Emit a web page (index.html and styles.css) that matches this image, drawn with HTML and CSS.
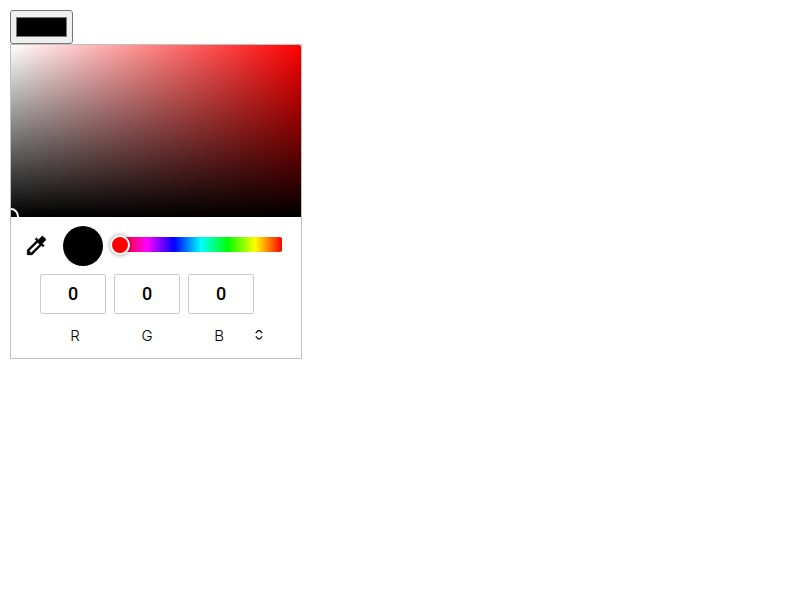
FILE: index.html
```html
<!DOCTYPE html>
<html lang="en">
<head>
<meta charset="utf-8">
<title>Color picker</title>
<link rel="stylesheet" href="styles.css">
</head>
<body>
<button class="swatch-button" aria-label="Color"><span class="swatch"></span></button>
<div class="picker">
  <div class="spectrum"><span class="spectrum-handle"></span></div>
  <div class="controls">
    <svg class="dropper" viewBox="0 0 24 24"><path d="M20.71 5.63l-2.34-2.34c-.39-.39-1.02-.39-1.41 0l-3.12 3.12-1.93-1.91-1.41 1.41 1.42 1.42L3 16.25V21h4.75l8.92-8.92 1.42 1.42 1.41-1.41-1.92-1.92 3.12-3.12c.4-.4.4-1.03.01-1.42zM6.92 19L5 17.08l8.06-8.06 1.92 1.92L6.92 19z"/></svg>
    <div class="preview"></div>
    <div class="hue"><span class="hue-thumb"></span></div>
  </div>
  <div class="values"><div class="value">0</div><div class="value">0</div><div class="value">0</div></div>
  <div class="labels">
    <span>R</span><span>G</span><span>B</span>
    <svg class="toggle" viewBox="0 0 8 12"><path d="M1.2 4.2V3.6L3.2 1.6H4.8L6.8 3.6V4.2M1.2 7.2V7.8L3.2 9.8H4.8L6.8 7.8V7.2"/></svg>
  </div>
</div>
</body>
</html>
```
FILE: styles.css
```css
* { box-sizing: border-box; }
body { margin: 0; padding: 10px; background: #fff; color: #000; font-family: Roboto, sans-serif; }
.swatch-button { display: flex; width: 63px; height: 34px; padding: 6px 5px; border: 1px solid #767676; border-radius: 3px; background: #efefef; }
.swatch { width: 51px; height: 20px; border: 1px solid #777; background: #000; }
.picker { width: 292px; height: 315px; border: 1px solid #bfbfbf; background: #fff; }
.spectrum { position: relative; height: 172px; overflow: hidden; border-top-right-radius: 2px; background: linear-gradient(to top, #000, transparent), linear-gradient(to right, #fff, #f00); }
.spectrum-handle { position: absolute; left: -8px; bottom: -8px; width: 16px; height: 17px; border: 2px solid #fff; border-radius: 50%; }
.controls { display: flex; padding: 9px 19px 0 13px; height: 57px; }
.dropper { width: 25px; height: 25px; margin-top: 7px; stroke: #000; stroke-width: .35; }
.preview { width: 40px; height: 40px; margin-left: 14px; border-radius: 50%; background: #000; }
.hue { position: relative; flex: 1; height: 15px; margin: 11px 0 0 17px; border-radius: 2px; background: linear-gradient(to right, #f00, #f0f, #00f, #0ff, #0f0, #ff0, #f00); }
.hue-thumb { position: absolute; left: -10px; top: -2px; width: 20px; height: 20px; border: 2px solid #fff; border-radius: 50%; background: #f00; box-shadow: 0 0 4px rgba(0,0,0,.45); }
.values { display: flex; gap: 8px; padding-left: 29px; }
.value { width: 66px; height: 40px; border: 1px solid #ccc; border-radius: 2px; font-size: 18px; font-weight: 500; line-height: 37px; text-align: center; }
.labels { display: flex; align-items: center; margin-top: 11px; padding-left: 28px; height: 20px; font-family: Inter, sans-serif; font-size: 15px; font-weight: 300; }
.labels span { width: 72px; text-align: center; }
.toggle { width: 8px; height: 12px; fill: none; stroke: #000; stroke-width: 1.2; }
```
